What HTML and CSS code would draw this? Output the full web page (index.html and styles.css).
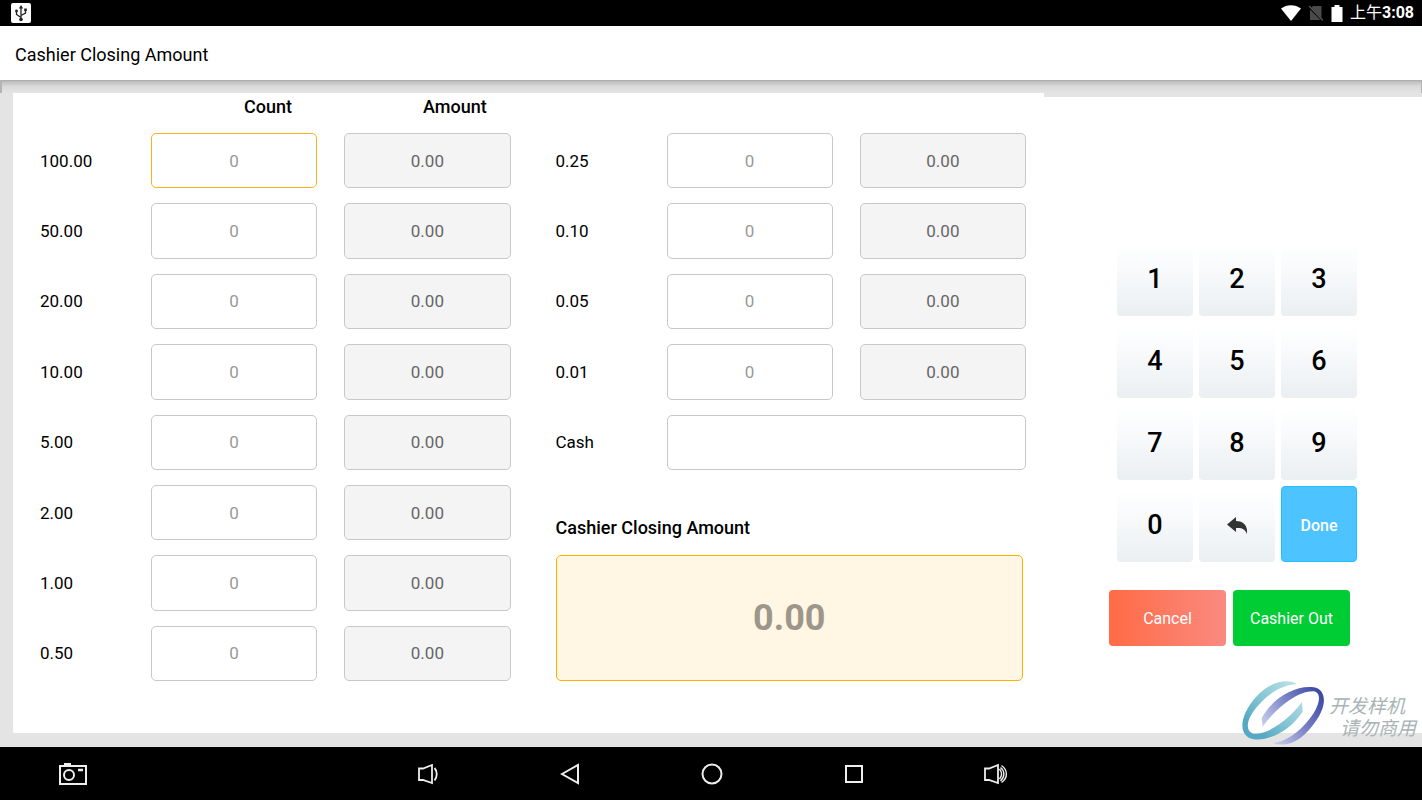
FILE: index.html
```
<!DOCTYPE html>
<html lang="en">
<head>
    <meta charset="UTF-8">
    <meta name="viewport" content="width=device-width, initial-scale=1.0">
    <title>Cashier Closing Amount</title>
    <link rel="stylesheet" href="styles.css">
</head>
<body>
    <div class="status-bar">
        <svg class="usb-icon" width="20" height="20" viewBox="0 0 20 20">
            <rect width="20" height="20" rx="2" fill="#fff"/>
            <path d="M10 4v13M10 14.500L5.500 11.500V8M10 12.500L14.500 10V7" fill="none" stroke="#222" stroke-width="1.300"/>
            <path d="M10 2l2.200 3.500H7.800zM13.200 5.500h2.600V8h-2.600z" fill="#222"/>
            <circle cx="5.500" cy="8" r="1.400" fill="#222"/>
            <circle cx="10" cy="16.500" r="1.800" fill="#222"/>
        </svg>
        <div class="status-right">
            <svg width="20" height="16" viewBox="0 0 20 16"><path d="M0 3.500C6-1 14-1 20 3.500L10 16z" fill="#fff"/></svg>
            <svg width="16" height="16" viewBox="0 0 16 16">
                <path d="M5 1h8.500v14H2V4z" fill="#4a4a4a"/>
                <path d="M0 1l15 15" stroke="#000" stroke-width="2"/>
                <path d="M1 1l14 14.500" stroke="#555" stroke-width="1.300"/>
            </svg>
            <svg width="12" height="17" viewBox="0 0 12 17"><path d="M3.500 0h5v2H11.500v15H0.500V2h3z" fill="#fff"/></svg>
            <span class="clock">上午<b>3:08</b></span>
        </div>
    </div>

    <header class="title-bar">
        <h1>Cashier Closing Amount</h1>
    </header>
    <div class="title-shadow"></div>

    <main class="content">
        <form class="cash-panel" id="cashForm">
            <div class="table-head">
                <span>Count</span>
                <span>Amount</span>
            </div>
            <div class="columns">
                <div class="column">
                    <div class="row">
                        <label for="c100">100.00</label>
                        <input type="text" id="c100" class="active" placeholder="0">
                        <input type="text" class="amount" value="0.00" aria-label="Amount 100.00" readonly>
                    </div>
                    <div class="row">
                        <label for="c50">50.00</label>
                        <input type="text" id="c50" placeholder="0">
                        <input type="text" class="amount" value="0.00" aria-label="Amount 50.00" readonly>
                    </div>
                    <div class="row">
                        <label for="c20">20.00</label>
                        <input type="text" id="c20" placeholder="0">
                        <input type="text" class="amount" value="0.00" aria-label="Amount 20.00" readonly>
                    </div>
                    <div class="row">
                        <label for="c10">10.00</label>
                        <input type="text" id="c10" placeholder="0">
                        <input type="text" class="amount" value="0.00" aria-label="Amount 10.00" readonly>
                    </div>
                    <div class="row">
                        <label for="c5">5.00</label>
                        <input type="text" id="c5" placeholder="0">
                        <input type="text" class="amount" value="0.00" aria-label="Amount 5.00" readonly>
                    </div>
                    <div class="row">
                        <label for="c2">2.00</label>
                        <input type="text" id="c2" placeholder="0">
                        <input type="text" class="amount" value="0.00" aria-label="Amount 2.00" readonly>
                    </div>
                    <div class="row">
                        <label for="c1">1.00</label>
                        <input type="text" id="c1" placeholder="0">
                        <input type="text" class="amount" value="0.00" aria-label="Amount 1.00" readonly>
                    </div>
                    <div class="row">
                        <label for="c050">0.50</label>
                        <input type="text" id="c050" placeholder="0">
                        <input type="text" class="amount" value="0.00" aria-label="Amount 0.50" readonly>
                    </div>
                </div>
                <div class="column">
                    <div class="row">
                        <label for="c025">0.25</label>
                        <input type="text" id="c025" placeholder="0">
                        <input type="text" class="amount" value="0.00" aria-label="Amount 0.25" readonly>
                    </div>
                    <div class="row">
                        <label for="c010">0.10</label>
                        <input type="text" id="c010" placeholder="0">
                        <input type="text" class="amount" value="0.00" aria-label="Amount 0.10" readonly>
                    </div>
                    <div class="row">
                        <label for="c005">0.05</label>
                        <input type="text" id="c005" placeholder="0">
                        <input type="text" class="amount" value="0.00" aria-label="Amount 0.05" readonly>
                    </div>
                    <div class="row">
                        <label for="c001">0.01</label>
                        <input type="text" id="c001" placeholder="0">
                        <input type="text" class="amount" value="0.00" aria-label="Amount 0.01" readonly>
                    </div>
                    <div class="row">
                        <label for="cash">Cash</label>
                        <input type="text" id="cash" class="wide">
                    </div>
                    <label class="total-label" for="total">Cashier Closing Amount</label>
                    <input type="text" id="total" class="total" value="0.00" readonly>
                </div>
            </div>
        </form>

        <section class="side-panel">
            <div class="side-inner">
                <div class="keypad">
                    <button type="button">1</button>
                    <button type="button">2</button>
                    <button type="button">3</button>
                    <button type="button">4</button>
                    <button type="button">5</button>
                    <button type="button">6</button>
                    <button type="button">7</button>
                    <button type="button">8</button>
                    <button type="button">9</button>
                    <button type="button">0</button>
                    <button type="button" aria-label="Back">
                        <svg width="21" height="17" viewBox="0 0 21 17"><path d="M0 7.500L9 0V4C16 4 21 8 20 17C18 12 15 10.500 9 11V15z" fill="#333"/></svg>
                    </button>
                    <button type="button" class="done">Done</button>
                </div>
                <div class="actions">
                    <button type="button" class="cancel">Cancel</button>
                    <button type="submit" form="cashForm" class="cashier-out">Cashier Out</button>
                </div>
            </div>
        </section>

        <div class="watermark">
            <svg width="83" height="67" viewBox="60 30 249 201">
                <defs>
                    <linearGradient id="teal" x1="0" y1="1" x2="1" y2="0">
                        <stop offset="0.200" stop-color="#55a9c4"/>
                        <stop offset="0.500" stop-color="#83c5d3"/>
                        <stop offset="1" stop-color="#c5e6ea"/>
                    </linearGradient>
                    <linearGradient id="violet" x1="0" y1="0.800" x2="1" y2="0.200">
                        <stop offset="0" stop-color="#d5d8ef"/>
                        <stop offset="0.550" stop-color="#7a83c8"/>
                        <stop offset="1" stop-color="#3c49a3"/>
                    </linearGradient>
                </defs>
                <path d="M222 40C190 25 140 37 100 83C55 135 50 185 80 203C120 222 200 190 242 125L240 96C205 145 135 197 95 191C65 182 75 140 115 100C150 60 190 45 222 43Z" fill="url(#teal)"/>
                <path d="M122 170L119 145C150 85 220 45 275 52C315 58 315 110 280 155C250 200 205 236 152 220C190 215 230 190 264 145C295 105 300 68 275 64C230 62 165 110 122 170Z" fill="url(#violet)"/>
            </svg>
            <div class="watermark-text">
                <div>开发样机</div>
                <div class="second">请勿商用</div>
            </div>
        </div>
    </main>

    <nav class="nav-bar">
        <button type="button" aria-label="Screenshot">
            <svg width="28" height="22" viewBox="0 0 28 22" fill="none" stroke="#eee" stroke-width="2">
                <path d="M1 3h26v18H1z"/>
                <path d="M5 1h7M19 7h5" stroke-width="2.500"/>
                <circle cx="10" cy="12" r="5"/>
            </svg>
        </button>
        <button type="button" class="volume-down" aria-label="Volume down">
            <svg width="20" height="22" viewBox="0 0 20 22" fill="none" stroke="#eee" stroke-width="1.800">
                <path d="M1 5.500H5L14 2V20L5 17H1z"/>
                <path d="M16.500 5C19.500 8 19.500 14 16.500 17.500"/>
            </svg>
        </button>
        <button type="button" aria-label="Back">
            <svg width="20" height="22" viewBox="0 0 20 22" fill="none" stroke="#eee" stroke-width="2"><path d="M2 11L18 2V20z"/></svg>
        </button>
        <button type="button" aria-label="Home">
            <svg width="22" height="22" viewBox="0 0 22 22" fill="none" stroke="#eee" stroke-width="2"><circle cx="11" cy="11" r="9.500"/></svg>
        </button>
        <button type="button" aria-label="Recent apps">
            <svg width="20" height="22" viewBox="0 0 20 22" fill="none" stroke="#eee" stroke-width="2"><path d="M2 3h16v16H2z"/></svg>
        </button>
        <button type="button" aria-label="Volume up">
            <svg width="24" height="22" viewBox="0 0 24 22" fill="none" stroke="#eee" stroke-width="1.800">
                <path d="M1 5.500H5L14 2V20L5 17H1z"/>
                <path d="M15.500 6C18 9 18 13 15.500 16M17.500 2.500C24 7 24 15 17.500 19.500M16.500 4.500C21 8 21 14 16.500 18" stroke-width="1.400"/>
            </svg>
        </button>
    </nav>
</body>
</html>
```
FILE: styles.css
```
* {
    margin: 0;
    padding: 0;
    box-sizing: border-box;
}

body {
    display: flex;
    flex-direction: column;
    min-height: 100vh;
    background-color: #e4e4e4;
    color: #000;
    font-family: Roboto, "Noto Sans CJK SC", sans-serif;
    font-size: 17px;
}

input,
button {
    font-family: inherit;
    font-size: inherit;
}

button {
    border: none;
    cursor: pointer;
}

/* Android status bar */
.status-bar {
    display: flex;
    justify-content: space-between;
    align-items: center;
    height: 26px;
    padding: 0 8px 0 11px;
    background-color: #000;
    color: #fff;
}

.status-right {
    display: flex;
    align-items: center;
    gap: 7px;
}

.clock {
    font-size: 16px;
    line-height: 26px;
}

/* App title */
.title-bar {
    display: flex;
    align-items: center;
    height: 54px;
    padding: 2px 15px 0;
    background-color: #fff;
}

.title-bar h1 {
    font-size: 18px;
    font-weight: 400;
}

.title-shadow {
    height: 13px;
    border: solid #b4b4b4;
    border-width: 0 1px 0 2px;
    background: linear-gradient(#a8a8a8, #c2c2c2 15%, #dadada 50%, #e4e4e4);
}

.content {
    position: relative;
    flex: 1;
    display: grid;
    grid-template-columns: 1031fr 378fr;
    padding: 0 0 14px 13px;
}

/* Cash counting form */
.cash-panel {
    display: flex;
    flex-direction: column;
    padding: 0 18px 52px 27px;
    background-color: #fff;
}

.table-head {
    display: flex;
    gap: 131px;
    height: 40px;
    padding-left: 204px;
    font-size: 18px;
    line-height: 27px;
    font-weight: 500;
}

.columns {
    flex: 1;
    display: grid;
    grid-template-columns: 1fr 1fr;
    gap: 45px;
}

.column {
    display: grid;
    grid-template-rows: repeat(8, 1fr);
    gap: 15px;
}

.row {
    display: grid;
    grid-template-columns: 84px 1fr 1fr;
    gap: 27px;
    align-items: center;
}

.row input {
    width: 100%;
    height: 100%;
    min-height: 32px;
    border: 1px solid #c8c8c8;
    border-radius: 5px;
    background-color: #fff;
    text-align: center;
}

.row input::placeholder {
    color: #999;
}

.row input.active {
    border-color: #ffb020;
}

.row input.amount {
    background-color: #f4f4f4;
    color: #666;
}

.row input.wide {
    grid-column: 2 / 4;
}

.total-label {
    align-self: end;
    font-size: 18px;
    line-height: 24px;
    font-weight: 500;
}

.total {
    grid-row: 7 / 9;
    margin-right: 3px;
    border: 1px solid #ffb000;
    border-radius: 5px;
    background-color: #fff6e4;
    color: #9c968b;
    font-size: 36px;
    font-weight: 700;
    text-align: center;
}

/* Keypad */
.side-panel {
    display: flex;
    justify-content: center;
    margin-top: 4px;
    padding-top: 143px;
    background-color: #fff;
}

.side-inner {
    width: 248px;
}

.keypad {
    display: grid;
    grid-template-columns: repeat(3, 76px);
    grid-auto-rows: 76px;
    justify-content: end;
    gap: 6px;
}

.keypad button {
    padding-top: 2px;
    border-radius: 4px;
    background: linear-gradient(#fff 5%, #f8fafb 40%, #eaeff2);
    color: #000;
    font-size: 27px;
    font-weight: 500;
}

.keypad button.done {
    border: 1px solid #20c0ff;
    background: #4dc3ff;
    color: #fff;
    font-size: 16px;
}

.actions {
    display: flex;
    gap: 7px;
    margin-top: 28px;
}

.actions button {
    width: 117px;
    height: 56px;
    border-radius: 4px;
    color: #fff;
    font-size: 16px;
}

.actions .cancel {
    background: linear-gradient(to right, #ff6b45, #fa8a80);
}

.actions .cashier-out {
    background: #00cc33;
}

/* Overlay in the corner */
.watermark {
    position: absolute;
    right: 6px;
    bottom: 0;
    display: flex;
    align-items: center;
    gap: 4px;
    pointer-events: none;
}

.watermark-text {
    padding-top: 8px;
    color: #a9b4b4;
    font-size: 19px;
    font-style: italic;
    line-height: 22px;
}

.watermark-text .second {
    padding-left: 11px;
}

/* Android navigation bar */
.nav-bar {
    display: grid;
    grid-template-columns: 10fr 15fr repeat(5, 10fr) 25fr;
    height: 53px;
    padding-left: 2px;
    background-color: #000;
}

.nav-bar button {
    display: flex;
    align-items: center;
    justify-content: center;
    background: none;
}

.nav-bar .volume-down {
    grid-column: 3;
}
```
